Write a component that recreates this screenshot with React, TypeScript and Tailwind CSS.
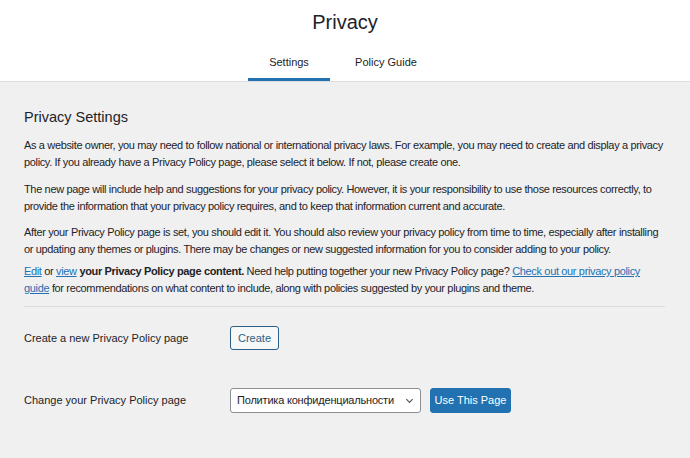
export default function App() {
  const f = { fontFamily: '"Liberation Sans", Arial, sans-serif' };
  return (
    <div style={f} className="w-[690px] h-[458px] bg-[#f0f0f1] text-[#1d2327] overflow-hidden">
      <div className="bg-white border-b border-[#dcdcde]">
        <h1 className="text-center text-[20px] pt-[9px] h-[44px] leading-[26px]">Privacy</h1>
        <div className="flex justify-center gap-[0px] text-[11px] h-[37px]">
          <div className="w-[82px] flex items-center justify-center border-b-[3px] border-[#2271b1] pt-[3px]">Settings</div>
          <div className="w-[112px] flex items-center justify-center pt-[3px] border-b-[3px] border-transparent">Policy Guide</div>
        </div>
      </div>
      <div className="px-6 pr-[25px] text-[11px] leading-[17px] tracking-[-0.35px]">
        <h2 className="text-[14.5px] font-normal mt-[27px] mb-[11px] tracking-normal">Privacy Settings</h2>
        <p>As a website owner, you may need to follow national or international privacy laws. For example, you may need to create and display a privacy policy. If you already have a Privacy Policy page, please select it below. If not, please create one.</p>
        <p className="mt-[10px]">The new page will include help and suggestions for your privacy policy. However, it is your responsibility to use those resources correctly, to provide the information that your privacy policy requires, and to keep that information current and accurate.</p>
        <p className="mt-[9px]">After your Privacy Policy page is set, you should edit it. You should also review your privacy policy from time to time, especially after installing or updating any themes or plugins. There may be changes or new suggested information for you to consider adding to your policy.</p>
        <p className="mt-[5px]"><a className="text-[#2271b1] underline">Edit</a> or <a className="text-[#2271b1] underline">view</a> <strong className="font-semibold">your Privacy Policy page content.</strong> Need help putting together your new Privacy Policy page? <a className="text-[#2271b1] underline">Check out our privacy policy guide</a> for recommendations on what content to include, along with policies suggested by your plugins and theme.</p>
        <hr className="border-[#dcdcde] mt-[9px]" />
        <div className="flex items-center mt-[19px] h-[24px] tracking-normal">
          <div className="w-[206px]">Create a new Privacy Policy page</div>
          <button className="h-[24px] px-[7px] border border-[#2c5f87] rounded-[3px] text-[#2c5f87] bg-[#f6f7f7]">Create</button>
        </div>
        <div className="flex items-center mt-[38px] h-[25px] tracking-normal">
          <div className="w-[206px]">Change your Privacy Policy page</div>
          <div className="w-[191px] h-[25px] border border-[#8c8f94] rounded-[3px] bg-white flex items-center justify-between pl-[6px] pr-[6px]">
            <span className="tracking-[-0.2px]">Политика конфиденциальности</span>
            <svg width="9" height="9" viewBox="0 0 10 10"><path d="M1.5 3.5 L5 7 L8.5 3.5" fill="none" stroke="#50575e" strokeWidth="1.3" /></svg>
          </div>
          <button className="ml-[9px] h-[25px] w-[81px] bg-[#2271b1] text-white rounded-[3px] border border-[#2271b1]">Use This Page</button>
        </div>
      </div>
    </div>
  );
}
